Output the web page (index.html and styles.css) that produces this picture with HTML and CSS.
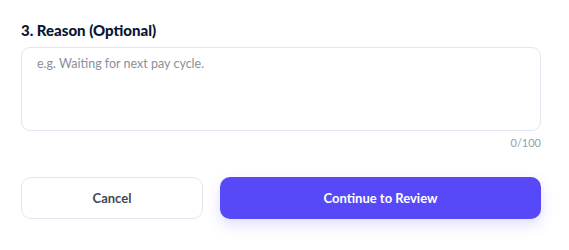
FILE: index.html
```html
<!DOCTYPE html>
<html lang="en">
<head>
  <meta charset="UTF-8" />
  <meta name="viewport" content="width=device-width, initial-scale=1.0"/>
  <title>Reason</title>
  <link rel="stylesheet" href="styles.css">
</head>
<body>

  <div class="step">
    <h3 class="step-title">3. Reason (Optional)</h3>
    <textarea class="reason" maxlength="100" placeholder="e.g. Waiting for next pay cycle."></textarea>
    <div class="counter">0/100</div>

    <div class="actions">
      <button class="btn btn-cancel">Cancel</button>
      <button class="btn btn-primary">Continue to Review</button>
    </div>
  </div>

</body>
</html>
```

FILE: styles.css
```css
body {
  margin: 0;
  background: #ffffff;
  font-family: Lato, "Noto Sans", sans-serif;
}
.step {
  width: 520px;
  padding: 20px 21px;
}
.step-title {
  margin: 0 0 7px;
  font-size: 15px;
  font-weight: 900;
  color: #0b1533;
  line-height: 20px;
}
.reason {
  display: block;
  box-sizing: border-box;
  width: 100%;
  height: 84px;
  padding: 8px 15px;
  border: 1px solid #e1e6f0;
  border-radius: 9px;
  font-family: inherit;
  font-size: 12.5px;
  color: #1e293b;
  resize: none;
  outline: none;
}
.reason::placeholder {
  color: #8a8f9a;
}
.counter {
  margin-top: 5px;
  text-align: right;
  font-size: 11px;
  color: #959cab;
  line-height: 14px;
}
.actions {
  display: grid;
  grid-template-columns: 182px 1fr;
  gap: 17px;
  margin-top: 27px;
}
.btn {
  height: 42px;
  border-radius: 10px;
  font-family: inherit;
  font-size: 13px;
  font-weight: 700;
  cursor: pointer;
}
.btn-cancel {
  background: #ffffff;
  border: 1px solid #e1e6f0;
  color: #3f4756;
}
.btn-primary {
  background: #5849f8;
  border: none;
  color: #ffffff;
  box-shadow: 0 6px 14px rgba(88, 73, 248, 0.18);
}
```
